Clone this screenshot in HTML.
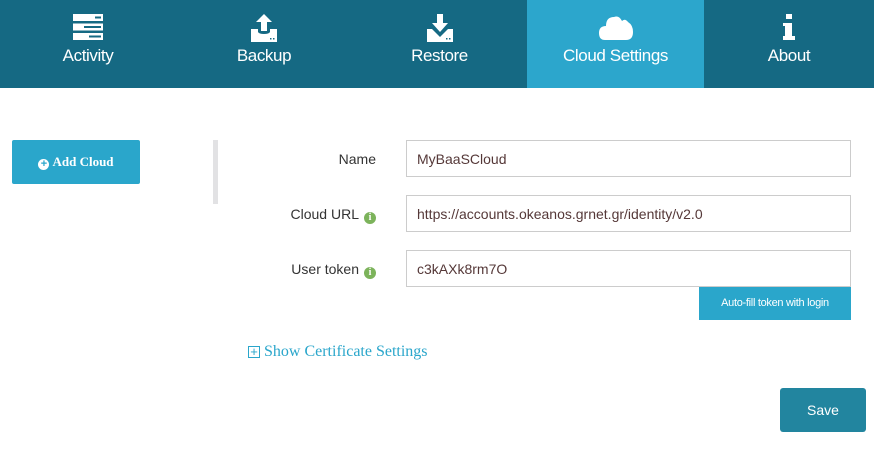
<!DOCTYPE html>
<html><head><meta charset="utf-8"><style>
*{margin:0;padding:0;box-sizing:border-box}
body{width:874px;height:454px;background:#fff;font-family:"Liberation Sans",sans-serif;position:relative;overflow:hidden}
.nav{position:absolute;left:0;top:0;width:874px;height:88px;background:#156983}
.tab{position:absolute;top:0;height:88px;color:#fff;font-size:17px;text-align:center}
.tab .lbl{position:absolute;top:46px;left:0;right:0;letter-spacing:-0.4px}
.tab svg{position:absolute;top:14px;left:50%;transform:translateX(-50%)}
.act{background:#2ca6cc}
.lab{position:absolute;font-size:14px;color:#333;text-align:right;right:498px}
.inp{position:absolute;left:406px;width:445px;height:37px;border:1px solid #ccc;font-size:14px;color:#553838;padding:10px 0 0 10px}
.info{display:inline-block;width:12px;height:12px;border-radius:50%;background:#7cb35b;color:#fff;font-size:10px;font-weight:bold;text-align:center;line-height:12px;font-family:"Liberation Serif",serif;vertical-align:-1px;margin-left:5px}
</style></head><body>
<div class="nav">
<div class="tab" style="left:0;width:176px"><svg width="30" height="26" viewBox="0 0 30 26"><g fill="#fff"><rect x="0" y="0" width="30" height="7"/><rect x="0" y="9.5" width="30" height="7"/><rect x="0" y="19" width="30" height="7"/></g><g fill="#156983"><rect x="22" y="2.5" width="6" height="2"/><rect x="11" y="12" width="17" height="2"/><rect x="16" y="21.5" width="12" height="2"/></g></svg><div class="lbl">Activity</div></div>
<div class="tab" style="left:176px;width:176px"><svg width="28" height="28" viewBox="0 0 28 28"><path d="M14 0 L22 8 L17 8 L17 17 L11 17 L11 8 L6 8Z" fill="#fff"/><path d="M1 15 L8 15 L8 18 Q9 20 14 20 Q19 20 20 18 L20 15 L27 15 L27 28 L1 28Z" fill="#fff"/><rect x="20" y="24" width="1.5" height="1.5" fill="#156983"/><rect x="23" y="24" width="1.5" height="1.5" fill="#156983"/></svg><div class="lbl">Backup</div></div>
<div class="tab" style="left:352px;width:175px"><svg width="28" height="28" viewBox="0 0 28 28"><path d="M11 0 L17 0 L17 9 L22 9 L14 18 L6 9 L11 9Z" fill="#fff"/><path d="M1 15 L6 15 L14 23 L22 15 L27 15 L27 28 L1 28Z" fill="#fff"/><rect x="20" y="24" width="1.5" height="1.5" fill="#156983"/><rect x="23" y="24" width="1.5" height="1.5" fill="#156983"/></svg><div class="lbl">Restore</div></div>
<div class="tab act" style="left:527px;width:177px"><svg width="34" height="26" viewBox="0 0 34 26"><path d="M6 26 Q0 26 0 19 Q0 12 7 12 Q7 3 15 3 Q20 1 23 7 Q26 4 29 8 Q34 11 34 18 Q34 26 27 26Z" fill="#fff"/></svg><div class="lbl">Cloud Settings</div></div>
<div class="tab" style="left:704px;width:170px"><svg width="12" height="28" viewBox="0 0 12 28"><g fill="#fff"><rect x="3" y="0" width="6" height="5"/><rect x="2" y="9" width="7" height="15"/><rect x="0" y="9" width="4" height="3"/><rect x="0" y="22" width="12" height="4"/></g></svg><div class="lbl">About</div></div>
</div>
<div style="position:absolute;left:12px;top:140px;width:128px;height:44px;background:#2aa6cb;border-radius:2px;color:#fff;font-family:'Liberation Serif',serif;font-weight:bold;font-size:13px;text-align:center;line-height:44px"><span style="display:inline-block;width:11px;height:11px;border-radius:50%;background:#fff;color:#2aa6cb;font-size:11px;line-height:11px;font-family:'Liberation Sans',sans-serif;vertical-align:-1px;margin-right:3px">+</span>Add Cloud</div>
<div style="position:absolute;left:213px;top:140px;width:5px;height:64px;background:#e2e2e4"></div>
<div class="lab" style="top:151px">Name</div>
<div class="lab" style="top:206px">Cloud URL<span class="info">i</span></div>
<div class="lab" style="top:261px">User token<span class="info">i</span></div>
<div class="inp" style="top:140px">MyBaaSCloud</div>
<div class="inp" style="top:195px">https://accounts.okeanos.grnet.gr/identity/v2.0</div>
<div class="inp" style="top:250px">c3kAXk8rm7O</div>
<div style="position:absolute;left:699px;top:287px;width:152px;height:33px;background:#2aa6cb;color:#fff;font-size:11px;text-align:center;line-height:33px;letter-spacing:-0.3px">Auto-fill token with login</div>
<div style="position:absolute;left:248px;top:343px;font-family:'Liberation Serif',serif;font-size:16px;color:#2aa6cb"><span style="display:inline-block;width:12px;height:12px;border:1px solid #2aa6cb;text-align:center;line-height:10px;font-size:13px;font-family:'Liberation Sans',sans-serif;vertical-align:0">+</span> Show Certificate Settings</div>
<div style="position:absolute;left:780px;top:388px;width:86px;height:44px;background:#22859f;border-radius:3px;color:#fff;font-size:14px;text-align:center;line-height:44px">Save</div>
</body></html>
